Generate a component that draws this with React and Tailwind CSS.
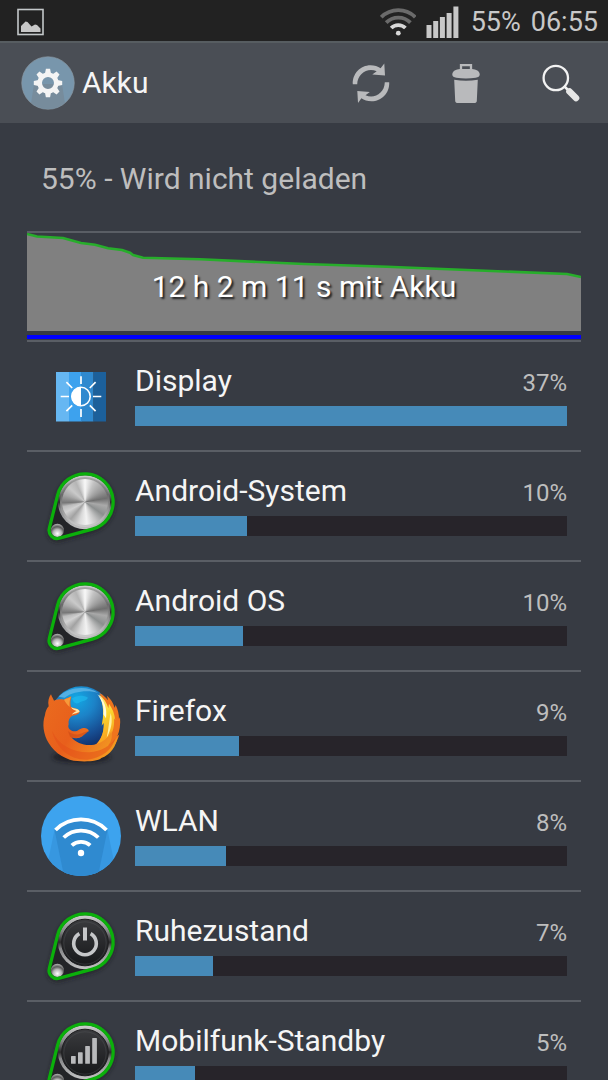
import React from "react";

// share = percent shown as text, bar = how far the bar is filled
const apps = [
  { name: "Display", share: 37, bar: 100, icon: <DisplayIcon /> },
  { name: "Android-System", share: 10, bar: 26, icon: <DialIcon metal /> },
  { name: "Android OS", share: 10, bar: 25, icon: <DialIcon metal /> },
  { name: "Firefox", share: 9, bar: 24, icon: <FirefoxIcon /> },
  { name: "WLAN", share: 8, bar: 21, icon: <WlanIcon /> },
  { name: "Ruhezustand", share: 7, bar: 18, icon: <DialIcon><PowerGlyph /></DialIcon> },
  { name: "Mobilfunk-Standby", share: 5, bar: 14, icon: <DialIcon><SignalGlyph /></DialIcon> },
];

function DisplayIcon() {
  return (
    <svg viewBox="0 0 80 80" className="size-20 shrink-0" aria-hidden="true">
      <rect x="15" y="16" width="13" height="49.5" fill="#66b7f2" />
      <rect x="28" y="16" width="12.5" height="49.5" fill="#3da2ee" />
      <rect x="40" y="16" width="12.5" height="49.5" fill="#2f89cf" />
      <rect x="52.5" y="16" width="12.5" height="49.5" fill="#1c609b" />
      <circle cx="40" cy="40.5" r="9.2" fill="none" stroke="#fff" strokeWidth="1.6" />
      <path d="M40 31a9.5 9.5 0 0 0 0 19z" fill="#fff" />
      <path
        d="M40 20.3v7.7M40 53v8M19.7 40.5h8.3M52 40.5h8.3M25.4 26.2l5.8 5.8M48.8 49.4l5.8 5.8M54.6 26.2l-5.8 5.8M31.2 49.4l-5.8 5.8"
        stroke="#fff"
        strokeWidth="1.7"
      />
    </svg>
  );
}

function DialIcon({ metal, children }) {
  const id = React.useId();
  const drop = "M16.6 29.1A28.2 28.2 0 1 1 51.4 63.2L18.5 72.2A8.2 8.2 0 0 1 8.3 62.3Z";
  return (
    <svg viewBox="0 0 80 80" className="size-20 shrink-0 overflow-visible" aria-hidden="true">
      <defs>
        <linearGradient id={id + "ring"} x1="0" y1="0" x2="0" y2="1">
          <stop offset="0" stopColor="#d0d0d0" />
          <stop offset="0.3" stopColor="#858688" />
          <stop offset="0.5" stopColor="#2b2b2d" />
          <stop offset="0.62" stopColor="#858688" />
          <stop offset="1" stopColor="#c4c4c4" />
        </linearGradient>
        <linearGradient id={id + "face"} x1="0" y1="0" x2="0" y2="1">
          <stop offset="0" stopColor="#3a3b3e" />
          <stop offset="1" stopColor="#17181a" />
        </linearGradient>
        <radialGradient id={id + "knob"} cx="0.5" cy="0.75" r="0.8">
          <stop offset="0" stopColor="#ffffff" />
          <stop offset="0.4" stopColor="#b5b5b5" />
          <stop offset="0.65" stopColor="#5a5a5a" />
          <stop offset="1" stopColor="#cdcdcd" />
        </radialGradient>
        <filter id={id + "soft"} x="-20%" y="-20%" width="140%" height="140%">
          <feGaussianBlur stdDeviation="2" />
        </filter>
      </defs>
      <path d={drop} fill="#1c1d20" stroke="#1c1d20" strokeWidth="3" opacity="0.7" transform="translate(0 2)" filter={`url(#${id}soft)`} />
      <path d={drop} fill="#232427" />
      <circle cx="44" cy="36.2" r="27" fill={`url(#${id}ring)`} />
      {metal ? (
        <foreignObject x="19" y="11" width="50" height="50">
          <div className="size-full rounded-full p-0.5 bg-[linear-gradient(#a9a9a9,#6b6b6b_35%,#8f8f8f_60%,#cfcfcf)]">
            <div className="size-full rounded-full bg-[conic-gradient(from_0deg,#f8f8f8_0deg,#c2c2c2_25deg,#9a9a9a_55deg,#6f6f6f_80deg,#a9a9a9_100deg,#8c8f8f_125deg,#c5c5c5_150deg,#f2f2f2_175deg,#d9d9d9_195deg,#a2a2a2_220deg,#d2d2d2_242deg,#bcbcbc_258deg,#777_268deg,#a8a8a8_290deg,#c9c9c9_312deg,#b5b5b5_335deg,#f8f8f8_360deg)]"></div>
          </div>
        </foreignObject>
      ) : (
        <>
          <circle cx="44" cy="36.5" r="23.3" fill={`url(#${id}face)`} stroke="#1d1d1f" strokeWidth="1" />
          <circle cx="44" cy="37" r="21.2" fill="none" stroke="#55565a" strokeWidth="0.7" opacity="0.6" />
        </>
      )}
      <circle cx="16.4" cy="64.3" r="6.6" fill={`url(#${id}knob)`} />
      <path d={drop} fill="none" stroke="#0bb00b" strokeWidth="3.3" strokeLinejoin="round" />
      {children}
    </svg>
  );
}

function PowerGlyph() {
  return (
    <g fill="none" stroke="#c6c7c9">
      <path d="M38.4 27.6A11.3 11.3 0 1 0 49.6 27.6" strokeWidth="3.6" />
      <path d="M44 21.5v13" strokeWidth="4" />
    </g>
  );
}

function SignalGlyph() {
  return (
    <g fill="#b9babc">
      <rect x="30" y="40" width="4.7" height="7.8" rx="0.6" />
      <rect x="37" y="36.3" width="4.7" height="11.5" rx="0.6" />
      <rect x="44.2" y="30" width="4.7" height="17.8" rx="0.6" />
      <rect x="51.2" y="22" width="4.7" height="25.8" rx="0.6" />
    </g>
  );
}

function FirefoxIcon() {
  return (
    <svg viewBox="15 15 240 240" className="size-20 shrink-0 overflow-visible" aria-hidden="true">
      <defs>
        <radialGradient id="globe" cx="0.42" cy="0.2" r="0.85">
          <stop offset="0" stopColor="#13a8e4" />
          <stop offset="0.35" stopColor="#1c83c8" />
          <stop offset="0.7" stopColor="#174f94" />
          <stop offset="1" stopColor="#102860" />
        </radialGradient>
        <linearGradient id="fur" x1="0" y1="0.2" x2="1" y2="0.7">
          <stop offset="0" stopColor="#ea6a1e" />
          <stop offset="0.45" stopColor="#e85f1c" />
          <stop offset="0.8" stopColor="#f08421" />
          <stop offset="1" stopColor="#f29a1f" />
        </linearGradient>
        <linearGradient id="flame" x1="0" y1="0" x2="0.3" y2="1">
          <stop offset="0" stopColor="#fff3a0" />
          <stop offset="0.5" stopColor="#fbd62f" />
          <stop offset="1" stopColor="#f6961c" />
        </linearGradient>
        <filter id="ground" x="-20%" y="-80%" width="140%" height="260%">
          <feGaussianBlur stdDeviation="6" />
        </filter>
      </defs>
      <ellipse cx="136" cy="228" rx="88" ry="18" fill="#15171b" opacity="0.7" filter="url(#ground)" />
      <circle cx="136" cy="109" r="93" fill="url(#globe)" />
      <path d="M68 47C95 20 150 10 187 36C158 26 112 30 86 50Z" fill="#7cc5ee" opacity="0.6" />
      <path d="M108 52c16-10 34-10 48-2c-6 12-20 8-28 16c-8 4-16 0-20-14z" fill="#22bdf0" opacity="0.6" />
      {/* right mane */}
      <path
        d="M190 36C202 42 210 50 216 58L213 44C225 54 232 66 236 80L239 72C246 86 249 100 249 114L252 108C254 130 251 150 244 166L250 160C242 190 222 216 196 226L132 220C186 200 206 164 204 124L198 130C206 98 204 62 190 36Z"
        fill="#ee741d"
      />
      <path
        d="M188 40C204 52 213 66 217 82L219 68C229 82 236 98 238 118L234 112C236 136 230 152 224 164L216 170C206 194 184 206 160 210C194 186 204 158 203 126L197 134C204 104 204 68 188 40Z"
        fill="url(#flame)"
      />
      <path d="M184 40C206 58 214 84 210 112L202 100C205 78 198 58 184 40Z" fill="#fffbe0" />
      <path d="M224 96C231 120 226 146 212 170C218 146 219 118 224 96Z" fill="#fff0a0" />
      {/* head, body and arm */}
      <path
        d="M45 40C48 48 52 54 54 59C64 55 76 54 84 56C92 51 100 49 106 46C103 58 102 68 105 78C114 82 126 82 131 91C131 99 122 102 108 105C100 110 96 120 98 130C94 140 101 149 113 151C126 152 130 142 142 141C152 141 159 146 158 151C150 154 146 160 139 166C130 173 116 173 106 169C121 187 147 196 174 191C200 186 218 170 226 150C230 166 226 182 216 194C228 190 240 178 245 164C242 196 222 222 196 231C190 240 150 243 124 240C96 240 56 218 38 186C22 160 18 128 27 102C28 92 32 83 38 76C35 62 38 50 45 40Z"
        fill="url(#fur)"
      />
      <path d="M48 150C66 190 110 216 160 214C196 212 224 194 238 172C230 206 196 232 154 236C104 238 62 204 48 150Z" fill="#e4501a" opacity="0.55" />
      <path d="M102 167C126 178 146 162 158 151C148 150 140 158 128 160C116 162 104 158 96 150Z" fill="#c94a18" opacity="0.6" />
      <path d="M105 79C116 84 126 82 131 91C128 97 116 97 107 101C112 95 118 92 122 90C114 88 108 85 105 79Z" fill="#ffe7a8" />
      <path d="M84 56C92 52 99 50 105 47C100 58 100 68 101 78C95 72 88 64 84 56Z" fill="#f79a3a" />
    </svg>
  );
}

function WlanIcon() {
  return (
    <svg viewBox="0 0 80 80" className="size-20 shrink-0" aria-hidden="true">
      <defs>
        <clipPath id="disc">
          <circle cx="40" cy="40" r="40" />
        </clipPath>
      </defs>
      <circle cx="40" cy="40" r="40" fill="#3da3ee" />
      <g clipPath="url(#disc)">
        <path d="M13.5 34L4 80H76L66.5 34C51 20 29 20 13.5 34Z" fill="#3797e0" />
        <path d="M13.5 34L23 80H57L66.5 34C51 20 29 20 13.5 34Z" fill="#2f8ad0" />
      </g>
      <g fill="none" stroke="#fff" strokeWidth="3.8">
        <path d="M14.5 34A36 36 0 0 1 65.5 34" />
        <path d="M22.7 41.5A25 25 0 0 1 57.3 41.5" />
        <path d="M30.8 49.4A13.5 13.5 0 0 1 49.2 49.4" />
      </g>
      <circle cx="40" cy="57" r="3.2" fill="#fff" />
    </svg>
  );
}

function StatusBar() {
  return (
    <div className="flex h-[43px] shrink-0 items-center border-b-2 border-[#575d61] bg-[#222222] pt-0.5 pr-2.5 pl-4 text-[#c8c8c8]">
      <svg viewBox="0 0 28 28" className="size-7" role="img" aria-label="Screenshot">
        <rect x="2" y="1.5" width="25" height="25" fill="none" stroke="#c4c8ca" strokeWidth="1.6" />
        <path d="M5 24v-6l4.5-4.5 2 .6 4 4.4 3.5-2 2 .6 3.5 3.4V24z" fill="#c8c8c8" />
      </svg>
      <svg viewBox="0 0 36 28" className="ml-auto h-7 w-9" role="img" aria-label="WLAN">
        <g fill="none" strokeWidth="3.8">
          <path d="M1.3 9.2A24 24 0 0 1 35.3 9.2" stroke="#6b6b6b" />
          <path d="M6.2 14.6A17 17 0 0 1 30.4 14.6" stroke="#6b6b6b" />
          <path d="M11.2 20A10 10 0 0 1 25.4 20" stroke="#d8d8d8" />
        </g>
        <circle cx="18.3" cy="25.2" r="2.4" fill="#d8d8d8" />
      </svg>
      <svg viewBox="0 0 33 32" className="ml-2.5 h-8 w-[33px]" role="img" aria-label="Mobilfunk" fill="#c8c8c8">
        <rect x="0.5" y="19" width="5" height="13" />
        <rect x="7.2" y="15" width="5" height="17" />
        <rect x="13.9" y="11" width="5" height="21" />
        <rect x="20.6" y="7" width="5" height="25" />
        <rect x="27.4" y="0.5" width="5" height="31.5" />
      </svg>
      <span className="ml-3 text-[27px] leading-9">55%</span>
      <span className="ml-2.5 text-[27px] leading-9">06:55</span>
    </div>
  );
}

function Header() {
  const teeth = [0, 45, 90, 135, 180, 225, 270, 315];
  return (
    <header className="flex h-20 shrink-0 items-center bg-[#4a4e55] pl-[21px]">
      <svg viewBox="0 0 54 54" className="size-[54px]" aria-hidden="true">
        <defs>
          <clipPath id="badge">
            <circle cx="27" cy="27" r="26" />
          </clipPath>
        </defs>
        <circle cx="27" cy="27" r="26.3" fill="#7896ac" stroke="#8d9ba5" strokeWidth="0.6" />
        <path d="M13 28L9 54H45L41 28Z" fill="#778c9c" clipPath="url(#badge)" />
        <g fill="#f4f4f4">
          {teeth.map((angle) => (
            <path key={angle} d="M24 17.5L24.900 12.800h4.200l.9 4.700z" transform={`rotate(${angle} 27 27)`} />
          ))}
        </g>
        <circle cx="27" cy="27" r="8.3" fill="none" stroke="#f4f4f4" strokeWidth="4.6" />
      </svg>
      <h1 className="ml-[7px] text-[30px] leading-9 text-[#f5f5f5]">Akku</h1>

      <div className="ml-auto flex">
        <button aria-label="Aktualisieren" className="flex h-20 w-[95px] items-center justify-center">
          <svg viewBox="0 0 38 40" className="h-10 w-[38px]" fill="#b9babc">
            <path d="M.8 21.3C.2 10.5 8.5 2.2 18.5 2.2C22.5 2.2 25.8 3.2 28.6 5.2L32.3 .6L33 12.6L20.3 11.5L24.7 8.3C16 4.2 5.5 10.2 5.2 21.3Z" />
            <path d="M37.2 19.2C37.8 29.8 29.6 38.3 19.5 38.3C15.5 38.3 12 37.2 9.4 35.3L6 40L5.3 28L17.8 29L13.5 32.2C22.2 36.2 32.6 30.2 32.8 19.2Z" />
          </svg>
        </button>
        <button aria-label="Löschen" className="flex h-20 w-[95px] items-center justify-center">
          <svg viewBox="0 0 28 40" className="h-10 w-7" fill="#b9babc">
            <path d="M9 6.5V2.2h10V6.5" fill="none" stroke="#b9babc" strokeWidth="2.3" />
            <path d="M.3 11.5C.3 8 4 6.3 8 6h12c4 .3 7.7 2 7.7 5.5 0 2-1.5 2.800-4 3.200-6.500 .9-13 .9-19.400 0C1.800 14.300.3 13.500.3 11.500z" />
            <path d="M2.2 16.8c8 1.2 15.6 1.2 23.6 0L24.8 38c-.1 1.6-1.2 2-3 2.2-5 .5-10.5 .5-15.6 0-1.8-.2-2.9-.6-3-2.200z" />
          </svg>
        </button>
        <button aria-label="Suchen" className="flex h-20 w-[95px] items-center justify-center">
          <svg viewBox="0 0 38 38" className="size-[38px]">
            <circle cx="13.8" cy="14" r="12.2" fill="none" stroke="#f2f2f2" strokeWidth="2.3" />
            <path d="M22 22l4.5 4.5" stroke="#f2f2f2" strokeWidth="2.5" />
            <path d="M27.5 27.5l6.5 6.5" stroke="#e6e6e6" strokeWidth="6.6" strokeLinecap="round" />
          </svg>
        </button>
      </div>
    </header>
  );
}

function BatteryChart() {
  const line =
    "M0 1L10 3.5L36 5L54 10L68 11.7L81 15.3L95 17L103 19.7L106 22L116 24.7L173 26.3L277 31L360 33.7L540 41L554 44";
  return (
    <div className="border-t-2 border-[#5a5e65]">
      <div className="relative pb-px">
        <svg viewBox="0 0 554 98" preserveAspectRatio="none" className="block h-[98px] w-full" aria-hidden="true">
          <path d={line + "V98H0Z"} fill="#808080" />
          <path d={line} fill="none" stroke="#27ad2b" strokeWidth="2.6" />
        </svg>
        <div className="mt-1 h-1 bg-[#0000ff]"></div>
        <p className="absolute inset-0 flex items-center justify-center text-[30px] leading-9 text-white [text-shadow:2px_2px_2px_#222]">
          12 h 2 m 11 s mit Akku
        </p>
      </div>
    </div>
  );
}

function AppRow({ app }) {
  return (
    <li className="flex items-center gap-3.5 border-t-2 border-[#5a5e65] px-3.5">
      {app.icon}
      <div className="min-w-0 flex-1 pt-[21px] pb-6">
        <div className="flex items-baseline justify-between">
          <span className="text-[30px] leading-9 text-[#f5f5f5]">{app.name}</span>
          <span className="text-2xl leading-8 text-[#bebebe]">{app.share}%</span>
        </div>
        <div className="mt-[7px] h-5 bg-[#27242a]">
          <div className="h-full bg-[#468ab8]" style={{ width: `${app.bar}%` }}></div>
        </div>
      </div>
    </li>
  );
}

export default function App() {
  return (
    <div className="flex h-screen flex-col overflow-hidden bg-[#373b43] font-[Roboto,sans-serif]">
      <StatusBar />
      <Header />
      <main className="min-h-0 flex-1 overflow-y-auto px-[27px] [scrollbar-width:none]">
        <p className="px-3.5 pt-[38px] pb-[34px] text-[30px] leading-9 text-[#bebebe]">55% - Wird nicht geladen</p>
        <BatteryChart />
        <ul>
          {apps.map((app) => (
            <AppRow key={app.name} app={app} />
          ))}
        </ul>
      </main>
    </div>
  );
}
